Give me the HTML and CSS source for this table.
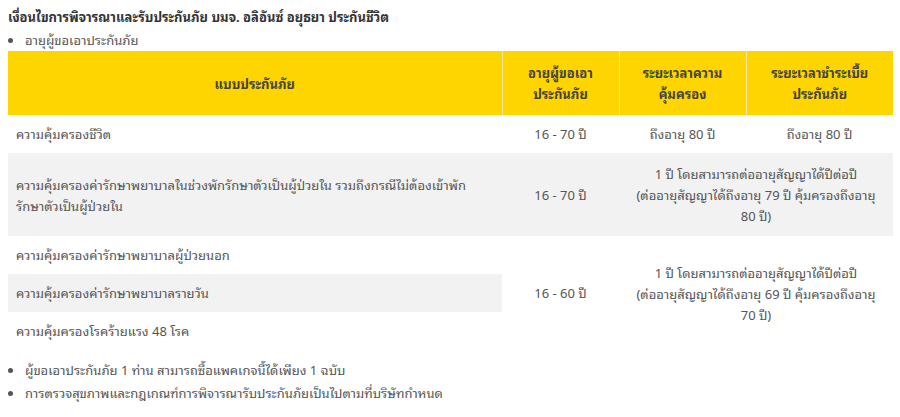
FILE: index.html
```html
<!DOCTYPE html>
<html lang="th">
<head>
<meta charset="utf-8">
<link rel="stylesheet" href="styles.css">
</head>
<body>
<div class="page">
  <h3 class="title">เงื่อนไขการพิจารณาและรับประกันภัย บมจ. อลิอันซ์ อยุธยา ประกันชีวิต</h3>
  <ul class="bullets">
    <li>อายุผู้ขอเอาประกันภัย</li>
  </ul>
  <table class="plan">
    <colgroup>
      <col class="c1"><col class="c2"><col class="c3"><col class="c4">
    </colgroup>
    <thead>
      <tr>
        <th>แบบประกันภัย</th>
        <th>อายุผู้ขอเอา<br>ประกันภัย</th>
        <th>ระยะเวลาความ<br>คุ้มครอง</th>
        <th>ระยะเวลาชำระเบี้ย<br>ประกันภัย</th>
      </tr>
    </thead>
    <tbody>
      <tr>
        <td class="name">ความคุ้มครองชีวิต</td>
        <td>16 - 70 ปี</td>
        <td>ถึงอายุ 80 ปี</td>
        <td>ถึงอายุ 80 ปี</td>
      </tr>
      <tr class="gray">
        <td class="name">ความคุ้มครองค่ารักษาพยาบาลในช่วงพักรักษาตัวเป็นผู้ป่วยใน รวมถึงกรณีไม่ต้องเข้าพัก<br>รักษาตัวเป็นผู้ป่วยใน</td>
        <td>16 - 70 ปี</td>
        <td colspan="2" class="wide">1 ปี โดยสามารถต่ออายุสัญญาได้ปีต่อปี<br>(ต่ออายุสัญญาได้ถึงอายุ 79 ปี คุ้มครองถึงอายุ<br>80 ปี)</td>
      </tr>
      <tr>
        <td class="name">ความคุ้มครองค่ารักษาพยาบาลผู้ป่วยนอก</td>
        <td rowspan="3">16 - 60 ปี</td>
        <td rowspan="3" colspan="2" class="wide">1 ปี โดยสามารถต่ออายุสัญญาได้ปีต่อปี<br>(ต่ออายุสัญญาได้ถึงอายุ 69 ปี คุ้มครองถึงอายุ<br>70 ปี)</td>
      </tr>
      <tr>
        <td class="name shade">ความคุ้มครองค่ารักษาพยาบาลรายวัน</td>
      </tr>
      <tr>
        <td class="name">ความคุ้มครองโรคร้ายแรง 48 โรค</td>
      </tr>
    </tbody>
  </table>
  <ul class="bullets after">
    <li>ผู้ขอเอาประกันภัย 1 ท่าน สามารถซื้อแพคเกจนี้ได้เพียง 1 ฉบับ</li>
    <li>การตรวจสุขภาพและกฎเกณฑ์การพิจารณารับประกันภัยเป็นไปตามที่บริษัทกำหนด</li>
  </ul>
</div>
</body>
</html>
```

FILE: styles.css
```css
html, body {
  margin: 0;
  padding: 0;
  background: #fff;
}
body {
  font-family: "Noto Sans Thai Looped", "Noto Sans", "Liberation Sans", sans-serif;
  font-size: 13px;
  color: #555;
}
.page {
  padding: 6px 7px 0 8px;
}
.title {
  margin: 0;
  font-size: 13px;
  font-weight: bold;
  color: #333;
  line-height: 22px;
}
.bullets {
  margin: 0;
  padding: 0 0 0 17px;
  list-style: disc;
  line-height: 23px;
}
.bullets.after {
  margin-top: 8px;
}
.plan {
  width: 885px;
  border-collapse: collapse;
  table-layout: fixed;
}
.c1 { width: 494px; }
.c2 { width: 117px; }
.c3 { width: 127px; }
.c4 { width: 147px; }
.plan th {
  background: #ffd500;
  color: #444;
  font-weight: bold;
  line-height: 21px;
  height: 64px;
  padding: 0 4px;
  box-sizing: border-box;
  border-left: 1px solid #f6e7a0;
  text-align: center;
  vertical-align: middle;
}
.plan th:first-child {
  border-left: none;
}
.plan td {
  line-height: 21px;
  padding: 8px 6px 9px;
  text-align: center;
  vertical-align: middle;
}
.plan td.name {
  text-align: left;
  padding-left: 8px;
}
.plan td.wide {
  padding: 8px 4px;
  white-space: nowrap;
}
.plan tr.gray td {
  background: #f2f2f2;
  padding-top: 10px;
  padding-bottom: 10px;
}
.plan td.shade {
  background: #f2f2f2;
}
```
